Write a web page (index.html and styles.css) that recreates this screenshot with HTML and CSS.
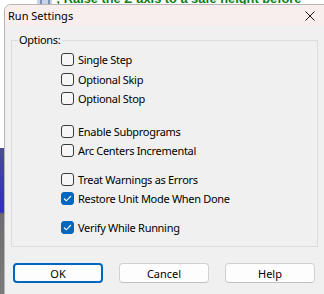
FILE: index.html
```html
<!DOCTYPE html>
<html lang="en">
<head>
    <meta charset="UTF-8">
    <title>Run Settings</title>
    <link rel="stylesheet" href="styles.css">
</head>
<body>
    <div class="backdrop">
        <div class="editor-line"><span class="gutter"></span><span class="comment">; Raise the Z-axis to a safe height before</span></div>
        <div class="side-strip"></div>
    </div>

    <div class="dialog">
        <div class="titlebar">
            <span class="title">Run Settings</span>
            <svg class="close" width="10" height="10" viewBox="0 0 10 10">
                <path d="M0.5 0.5 L9.5 9.5 M9.5 0.5 L0.5 9.5" stroke="#1a1a1a" stroke-width="1" fill="none"/>
            </svg>
        </div>
        <div class="content">
            <fieldset class="group">
                <legend>Options:</legend>
                <div class="options">
                    <label class="row"><span class="box"></span>Single Step</label>
                    <label class="row"><span class="box"></span>Optional Skip</label>
                    <label class="row"><span class="box"></span>Optional Stop</label>
                    <label class="row gap-lg"><span class="box"></span>Enable Subprograms</label>
                    <label class="row"><span class="box"></span>Arc Centers Incremental</label>
                    <label class="row gap-md"><span class="box"></span>Treat Warnings as Errors</label>
                    <label class="row"><span class="box checked"><svg width="9" height="7" viewBox="0 0 9 7"><path d="M1 3.5 L3.3 5.8 L8 1" stroke="#fff" stroke-width="1.1" fill="none"/></svg></span>Restore Unit Mode When Done</label>
                    <label class="row gap-md"><span class="box checked"><svg width="9" height="7" viewBox="0 0 9 7"><path d="M1 3.5 L3.3 5.8 L8 1" stroke="#fff" stroke-width="1.1" fill="none"/></svg></span>Verify While Running</label>
                </div>
            </fieldset>
            <div class="buttons">
                <button class="btn default">OK</button>
                <button class="btn">Cancel</button>
                <button class="btn">Help</button>
            </div>
        </div>
    </div>
</body>
</html>
```

FILE: styles.css
```css
body {
    margin: 0;
    width: 324px;
    height: 294px;
    overflow: hidden;
    position: relative;
    background: #ffffff;
    font-family: "Noto Sans", "Liberation Sans", sans-serif;
    font-size: 11px;
    color: #000;
}

/* window behind the dialog */
.backdrop {
    position: absolute;
    left: 0;
    top: 0;
    width: 324px;
    height: 294px;
}

.editor-line {
    position: absolute;
    left: 37px;
    top: -9px;
    display: flex;
    align-items: center;
    white-space: nowrap;
}

.gutter {
    width: 15px;
    height: 14px;
    margin-right: 4px;
    background: linear-gradient(90deg, #c9d3e6 0 3px, #7c8fb8 3px 5px, #c9d3e6 5px 11px, #7c8fb8 11px 13px, #c9d3e6 13px);
}

.comment {
    color: #0a7d12;
    font-family: "Liberation Sans", sans-serif;
    font-weight: bold;
    font-size: 12.8px;
}

.side-strip {
    position: absolute;
    left: 0;
    top: 0;
    width: 4px;
    height: 294px;
    background: linear-gradient(180deg, #ffffff 0 148px, #4a4f8f 148px, #3c3fb0 175px, #2f2fc8 212px, #6e6e72 214px, #7b7b7b 294px);
}

/* dialog */
.dialog {
    position: absolute;
    left: 4px;
    top: 4px;
    width: 330px;
    height: 300px;
    border: 1px solid #b9b3b3;
    border-radius: 7px 0 0 0;
    background: #f0f0f0;
    overflow: hidden;
    box-sizing: border-box;
}

.titlebar {
    height: 21px;
    background: #f8eeed;
    display: flex;
    align-items: center;
    padding-left: 3px;
    position: relative;
}

.title {
    font-size: 11px;
}

.close {
    position: absolute;
    left: 300px;
    top: 6px;
}

.content {
    padding: 7px 0 0 6px;
}

.group {
    width: 307px;
    height: 214px;
    margin: 0;
    padding: 0;
    border: 1px solid #dcdcdc;
    box-sizing: border-box;
}

.group legend {
    margin-left: 6px;
    padding: 0 2px 0 1px;
    font-size: 11px;
    letter-spacing: -0.3px;
    line-height: 14px;
}

.options {
    display: flex;
    flex-direction: column;
    padding: 3px 0 0 49px;
}

.row {
    display: flex;
    align-items: center;
    height: 19.5px;
    gap: 4px;
    white-space: nowrap;
    letter-spacing: -0.3px;
}

.row.gap-lg {
    margin-top: 13px;
}

.row.gap-md {
    margin-top: 9px;
}

.box {
    width: 13px;
    height: 13px;
    box-sizing: border-box;
    border: 1px solid #3b3b3b;
    border-radius: 3px;
    background: #f6f6f6;
    display: flex;
    align-items: center;
    justify-content: center;
    flex-shrink: 0;
}

.box.checked {
    background: #0067c0;
    border-color: #0067c0;
}

.buttons {
    display: flex;
    gap: 16px;
    margin-top: 16px;
    padding-left: 2px;
}

.btn {
    width: 90px;
    height: 20px;
    box-sizing: border-box;
    border: 1px solid #d0d0d0;
    border-bottom-color: #c2c2c2;
    border-radius: 4px;
    background: #fdfdfd;
    font-family: "Noto Sans", "Liberation Sans", sans-serif;
    font-size: 11px;
    color: #000;
    padding: 0;
}

.btn.default {
    border: 2px solid #0067c0;
}
```
